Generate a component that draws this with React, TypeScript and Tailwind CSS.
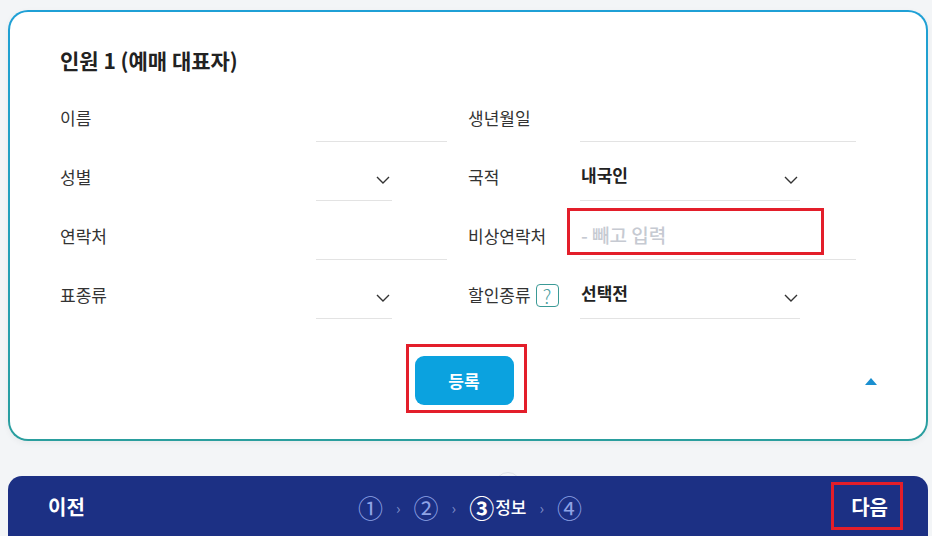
import React from "react";

const font = { fontFamily: '"Noto Sans CJK KR", "Noto Sans", sans-serif' };

function Chevron() {
  return (
    <svg width="14" height="8" viewBox="0 0 14 8" className="shrink-0 mt-[7px]">
      <polyline points="1,1 7,7 13,1" fill="none" stroke="#333" strokeWidth="1.4" />
    </svg>
  );
}

function Label({ children }: { children: React.ReactNode }) {
  return <div className="flex items-center text-[17px] text-[#333] h-[48px]">{children}</div>;
}

function TextField({ w }: { w: string }) {
  return <div className={`h-[48px] border-b border-[#e3e3e3] ${w}`} />;
}

function SelectField({ w, value, pr }: { w: string; value?: string; pr: string }) {
  return (
    <div className={`h-[48px] border-b border-[#e3e3e3] flex items-center justify-between ${w} ${pr}`}>
      <span className="text-[17px] font-bold text-[#222] pl-[1px] -mt-[4px]">{value}</span>
      <Chevron />
    </div>
  );
}

function Sep() {
  return <span className="text-[15px] text-[#7f8fc8] mt-[2px]">›</span>;
}

export default function App() {
  return (
    <div className="w-[932px] h-[536px] bg-[#f3f5f7] overflow-hidden relative" style={font}>
      <div className="ml-[8px] mt-[10px] w-[920px] rounded-[20px] p-[2px] bg-gradient-to-b from-[#1fa0d6] to-[#2a9e9e] shadow-[0_2px_6px_rgba(0,0,0,0.05)]">
        <div className="bg-white rounded-[18px] pl-[50px] pt-[34px] pb-[34px] relative">
          <h2 className="text-[21px] leading-[28px] font-bold text-[#222]">인원 1 (예매 대표자)</h2>
          <div className="mt-[20px] grid grid-cols-[256px_131px_21px_112px_276px] gap-y-[11px]">
            <Label>이름</Label>
            <TextField w="w-[131px]" />
            <div />
            <Label>생년월일</Label>
            <TextField w="w-[276px]" />

            <Label>성별</Label>
            <SelectField w="w-[76px]" pr="pr-[2px]" />
            <div />
            <Label>국적</Label>
            <SelectField w="w-[220px]" value="내국인" pr="pr-[2px]" />

            <Label>연락처</Label>
            <TextField w="w-[131px]" />
            <div />
            <Label>비상연락처</Label>
            <div className="relative h-[48px] border-b border-[#e3e3e3] w-[276px] flex items-center">
              <span className="text-[19px] font-medium text-[#c6cad2] pl-[1px]">- 빼고 입력</span>
              <div className="absolute left-[-13px] top-[-4px] w-[257px] h-[47px] border-[3px] border-[#e31e2a]" />
            </div>

            <Label>표종류</Label>
            <SelectField w="w-[76px]" pr="pr-[2px]" />
            <div />
            <div className="flex items-center text-[17px] text-[#333] h-[48px] gap-[5px]">
              할인종류
              <span className="w-[23px] h-[23px] border border-[#3b9a96] rounded-[4px] flex items-center justify-center text-[19px] leading-none text-[#4aa0a0] font-light">?</span>
            </div>
            <SelectField w="w-[220px]" value="선택전" pr="pr-[2px]" />
          </div>

          <div className="mt-[37px] flex justify-center relative pr-[58px]">
            <div className="relative">
              <button className="w-[99px] h-[49px] rounded-[9px] bg-[#0ba2df] text-white text-[17px] font-bold">
                등록
              </button>
              <div className="absolute left-[-9px] top-[-12px] w-[121px] h-[69px] border-[3px] border-[#e31e2a]" />
            </div>
            <svg width="12" height="7" viewBox="0 0 12 7" className="absolute left-[805px] top-[22px]">
              <polygon points="6,0 12,7 0,7" fill="#1a8fd0" />
            </svg>
          </div>
        </div>
      </div>

      <div className="absolute left-[495px] top-[472px] w-[26px] h-[26px] rounded-full border border-[#dfe3e8] bg-[#f3f5f7]" />
      <div className="ml-[8px] mt-[35px] w-[920px] h-[62px] bg-[#1c3084] rounded-t-[14px] relative flex items-center justify-between pl-[40px] pr-[40px]">
        <span className="text-white text-[20px] font-bold">이전</span>
        <div className="absolute left-0 right-0 top-0 h-full flex items-center justify-center gap-[13px] pl-[4px] text-[#8fa3e6]">
          <span className="text-[25px] leading-none">①</span>
          <Sep />
          <span className="text-[25px] leading-none">②</span>
          <Sep />
          <span className="flex items-center gap-[1px] text-white">
            <span className="text-[25px] leading-none font-bold">③</span>
            <span className="text-[17px] font-medium -mt-[1px]">정보</span>
          </span>
          <Sep />
          <span className="text-[25px] leading-none">④</span>
        </div>
        <div className="relative">
          <span className="text-white text-[20px] font-bold">다음</span>
          <div className="absolute left-[-20px] top-[-10px] w-[72px] h-[48px] border-[3px] border-[#e31e2a]" />
        </div>
      </div>
    </div>
  );
}
